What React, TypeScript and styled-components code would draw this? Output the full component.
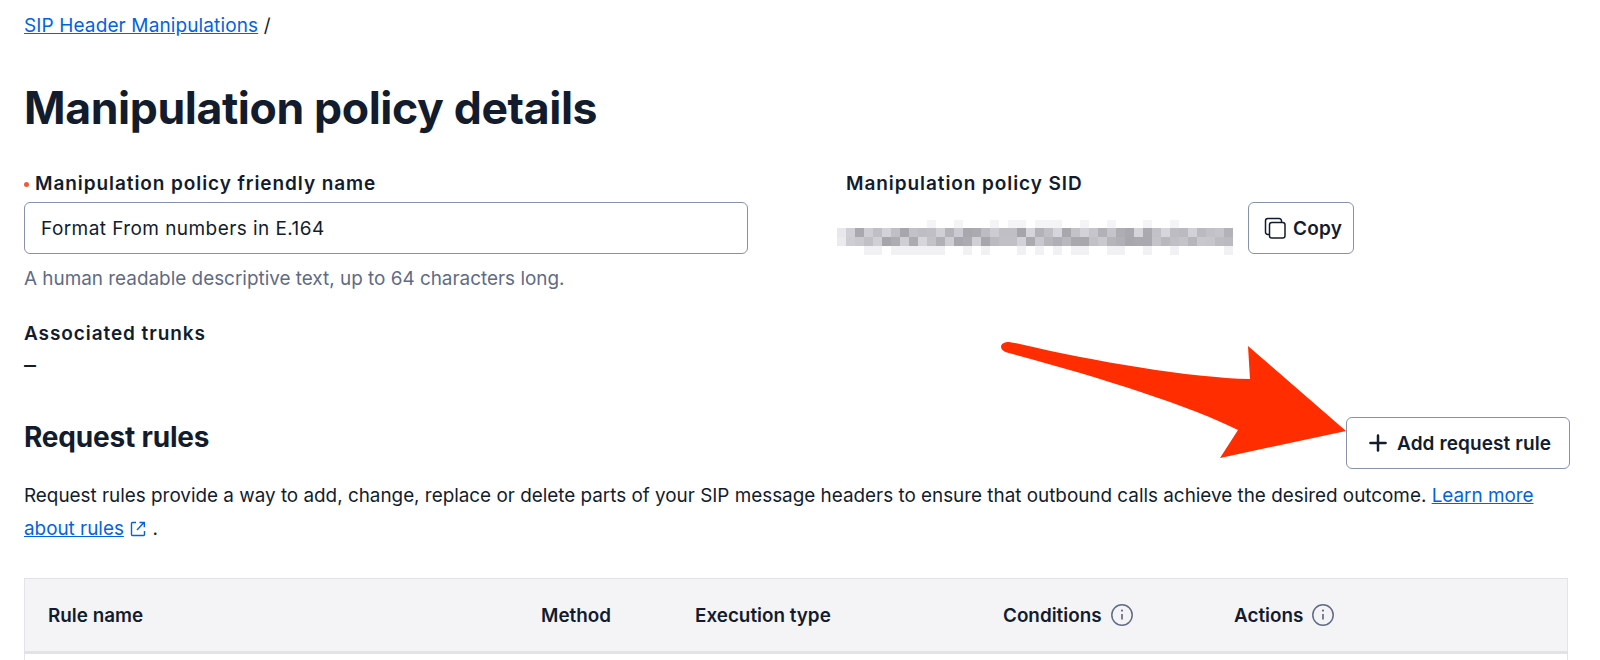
import * as React from 'react';
import styled, { createGlobalStyle } from 'styled-components';
import { Plus } from 'lucide-react';

const GlobalStyle = createGlobalStyle`
  html, body {
    margin: 0;
    padding: 0;
    height: 660px;
    overflow: hidden;
    background: #fff;
  }
  body {
    font-family: Inter, "Noto Sans", sans-serif;
    color: #121c2d;
  }
`;

// stand-in for the pixelated SID in the screenshot
function mosaicCells() {
  const cells: { x: number; y: number; h: number; fill: string; opacity: number }[] = [];
  let seed = 17;
  const next = () => {
    seed = (seed * 16807) % 2147483647;
    return seed / 2147483647;
  };
  for (let col = 0; col < 44; col++) {
    const x = col * 9;
    [0, 9].forEach((y) => {
      const v = Math.round(165 + next() * 50);
      cells.push({ x, y: y + 8, h: 9, fill: `rgb(${v},${v},${v + 6})`, opacity: col === 0 ? 0.25 : 1 });
    });
    if (col > 2 && next() > 0.55) {
      cells.push({ x, y: 0, h: 8, fill: '#f0f0f3', opacity: 0.7 });
    }
    if (col > 2 && next() > 0.55) {
      cells.push({ x, y: 26, h: 9, fill: '#ebebef', opacity: 0.7 });
    }
  }
  return cells;
}

function App() {
  return (
    <Page>
      <GlobalStyle />
      <Breadcrumb>
        <TextLink href="#">SIP Header Manipulations</TextLink> /
      </Breadcrumb>
      <Title>Manipulation policy details</Title>
      <Fields>
        <NameField>
          <Label>
            <RequiredDot />
            Manipulation policy friendly name
          </Label>
          <NameInput defaultValue="Format From numbers in E.164" />
          <Help>A human readable descriptive text, up to 64 characters long.</Help>
        </NameField>
        <SidField>
          <SidLabel>Manipulation policy SID</SidLabel>
          <SidRow>
            <SidMosaic width="396" height="35" viewBox="0 0 396 35" aria-hidden="true">
              {mosaicCells().map((c, i) => (
                <rect key={i} x={c.x} y={c.y} width="9" height={c.h} fill={c.fill} opacity={c.opacity} />
              ))}
            </SidMosaic>
            <CopyButton type="button">
              <ButtonIcon width="24" height="24" viewBox="0 0 24 24" fill="none" stroke="#121c2d" strokeWidth="1.5">
                <path d="M6.5 18.5H4.8a2.3 2.3 0 0 1-2.3-2.3V4.8a2.3 2.3 0 0 1 2.3-2.3h11.4a2.3 2.3 0 0 1 2.3 2.3v1.7" />
                <rect x="6.5" y="6.5" width="15.5" height="15.5" rx="2.3" />
              </ButtonIcon>
              Copy
            </CopyButton>
          </SidRow>
        </SidField>
      </Fields>
      <Trunks>
        <TrunksLabel>Associated trunks</TrunksLabel>
        <TrunksValue>–</TrunksValue>
      </Trunks>
      <SectionHead>
        <SectionTitle>Request rules</SectionTitle>
        <AddButton type="button">
          <Plus size={26} strokeWidth={2.3} />
          Add request rule
        </AddButton>
      </SectionHead>
      <Description>
        Request rules provide a way to add, change, replace or delete parts of your SIP message headers to ensure that
        outbound calls achieve the desired outcome. <TextLink href="#">Learn more about rules</TextLink>{' '}
        <ExternalIcon width="18" height="18" viewBox="0 0 18 18" fill="none" stroke="#0263e0" strokeWidth="1.4">
          <path d="M7 2.5H3.5a1 1 0 0 0-1 1v11a1 1 0 0 0 1 1h11a1 1 0 0 0 1-1V11" />
          <path d="M8 10l7-7.5M10.5 2.5h4.8v4.8" />
        </ExternalIcon>{' '}
        .
      </Description>
      <RulesTable>
        <HeaderRow>
          <HeaderCell>Rule name</HeaderCell>
          <HeaderCell>Method</HeaderCell>
          <HeaderCell>Execution type</HeaderCell>
          <HeaderCell>
            Conditions
            <InfoIcon />
          </HeaderCell>
          <HeaderCell>
            Actions
            <InfoIcon />
          </HeaderCell>
        </HeaderRow>
        <EmptyBody />
      </RulesTable>
      <Arrow width="360" height="130" viewBox="0 0 360 130" aria-hidden="true">
        <path
          d="M5 2C8 2 14 3 20 4.5C90 21 190 38 248 39L246 6L344 91L218 118L236 90C190 66 90 35 5 12.5C-3 10 -3 3 5 2Z"
          fill="#ff2d00"
        />
      </Arrow>
    </Page>
  );
}

function InfoIcon() {
  return (
    <InfoSvg width="24" height="24" viewBox="0 0 24 24" fill="none">
      <circle cx="12" cy="12" r="10.2" stroke="#606b85" strokeWidth="1.5" />
      <circle cx="12" cy="7.6" r="1.1" fill="#606b85" />
      <path d="M12 11v5.5" stroke="#606b85" strokeWidth="1.7" />
    </InfoSvg>
  );
}

const Page = styled.div`
  position: relative;
  width: 1544px;
  height: 660px;
  padding: 14px 32px 0 24px;
  overflow: hidden;
`;

const Breadcrumb = styled.div`
  font-size: 19px;
  line-height: 24px;
  letter-spacing: 0.12px;
`;

const TextLink = styled.a`
  color: #0263e0;
  text-decoration: underline;
`;

const Title = styled.h1`
  margin: 38px 0 0;
  font-size: 44.6px;
  line-height: 64px;
  font-weight: 700;
  letter-spacing: -0.4px;
`;

const Fields = styled.div`
  display: flex;
  margin-top: 32px;
`;

const NameField = styled.div`
  width: 724px;
  margin-right: 98px;
`;

const Label = styled.div`
  display: flex;
  align-items: center;
  font-size: 19px;
  line-height: 24px;
  font-weight: 600;
  letter-spacing: 0.92px;
`;

const RequiredDot = styled.span`
  width: 5px;
  height: 5px;
  margin-right: 6px;
  border-radius: 50%;
  background: #f2593a;
`;

const NameInput = styled.input`
  display: block;
  box-sizing: border-box;
  width: 100%;
  height: 52px;
  margin-top: 6px;
  padding: 0 16px;
  border: 1px solid #8891aa;
  border-radius: 6px;
  outline: none;
  background: #fff;
  color: #121c2d;
  font: 400 19px Inter, sans-serif;
  letter-spacing: 0.43px;
`;

const Help = styled.div`
  margin-top: 13px;
  font-size: 18.9px;
  line-height: 24px;
  color: #606b85;
`;

const SidField = styled.div`
  display: flex;
  flex-direction: column;
`;

const SidLabel = styled(Label)``;

const SidRow = styled.div`
  display: flex;
  align-items: center;
  gap: 15px;
  height: 52px;
  margin-top: 6px;
  margin-left: -9px;
`;

const SidMosaic = styled.svg`
  margin-top: 19px;
`;

const OutlineButton = styled.button`
  display: inline-flex;
  align-items: center;
  box-sizing: border-box;
  height: 52px;
  border: 1px solid #8891aa;
  border-radius: 6px;
  background: #fff;
  color: #121c2d;
  font: 600 19px Inter, sans-serif;
  white-space: nowrap;
`;

const ButtonIcon = styled.svg`
  flex: none;
`;

const CopyButton = styled(OutlineButton)`
  gap: 6px;
  width: 106px;
  padding: 0 0 0 14px;
  letter-spacing: 0.2px;
`;

const Trunks = styled.div`
  margin-top: 31px;
`;

const TrunksLabel = styled(Label)``;

const TrunksValue = styled.div`
  margin-top: 7px;
  font-size: 24px;
  line-height: 24px;
  font-weight: 400;
`;

const SectionHead = styled.div`
  display: flex;
  justify-content: space-between;
  align-items: flex-start;
  margin-top: 40px;
`;

const SectionTitle = styled.h2`
  margin: 0;
  font-size: 28px;
  line-height: 40px;
  font-weight: 700;
  letter-spacing: -0.2px;
`;

const AddButton = styled(OutlineButton)`
  gap: 6px;
  width: 224px;
  margin-right: -2px;
  padding: 0 0 0 18px;
  letter-spacing: 0.1px;

  svg {
    flex: none;
  }
`;

const Description = styled.p`
  margin: 10px 0 0;
  font-size: 18.87px;
  line-height: 33px;
`;

const ExternalIcon = styled.svg`
  vertical-align: -3px;
`;

const RulesTable = styled.div`
  margin-top: 33px;
  border: 1px solid #e1e3ea;
  border-bottom: 0;
`;

const HeaderRow = styled.div`
  display: grid;
  grid-template-columns: 493px 154px 308px 231px 1fr;
  align-items: center;
  height: 72px;
  padding-left: 23px;
  background: #f4f4f6;
  border-bottom: 3px solid #e1e3ea;
`;

const HeaderCell = styled.div`
  display: flex;
  align-items: center;
  gap: 8px;
  font-size: 18.85px;
  font-weight: 600;
`;

const InfoSvg = styled.svg`
  flex: none;
`;

const EmptyBody = styled.div`
  height: 40px;
`;

const Arrow = styled.svg`
  position: absolute;
  left: 1002px;
  top: 340px;
  overflow: visible;
`;

export default App;
